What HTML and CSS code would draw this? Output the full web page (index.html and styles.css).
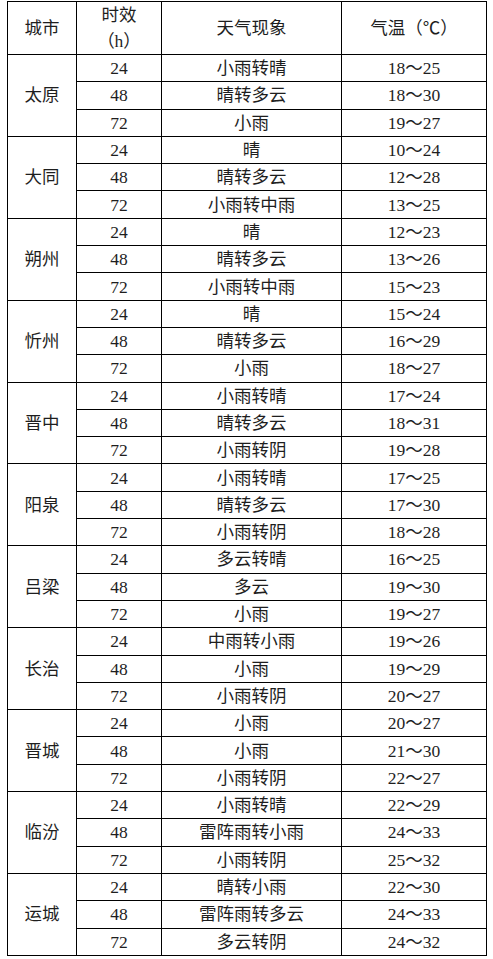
FILE: index.html
```html
<!DOCTYPE html>
<html lang="zh-CN">
<head>
<meta charset="utf-8">
<title>城市天气预报</title>
<link rel="stylesheet" href="styles.css">
</head>
<body>
<table class="forecast">
  <colgroup>
    <col class="c-city">
    <col class="c-hour">
    <col class="c-wx">
    <col class="c-temp">
  </colgroup>
  <thead>
    <tr class="head">
      <th>城市</th>
      <th>时效<br>（h）</th>
      <th>天气现象</th>
      <th>气温（℃）</th>
    </tr>
  </thead>
  <tbody>
    <tr><td class="city" rowspan="3">太原</td><td>24</td><td>小雨转晴</td><td>18～25</td></tr>
    <tr><td>48</td><td>晴转多云</td><td>18～30</td></tr>
    <tr><td>72</td><td>小雨</td><td>19～27</td></tr>

    <tr><td class="city" rowspan="3">大同</td><td>24</td><td>晴</td><td>10～24</td></tr>
    <tr><td>48</td><td>晴转多云</td><td>12～28</td></tr>
    <tr><td>72</td><td>小雨转中雨</td><td>13～25</td></tr>

    <tr><td class="city" rowspan="3">朔州</td><td>24</td><td>晴</td><td>12～23</td></tr>
    <tr><td>48</td><td>晴转多云</td><td>13～26</td></tr>
    <tr><td>72</td><td>小雨转中雨</td><td>15～23</td></tr>

    <tr><td class="city" rowspan="3">忻州</td><td>24</td><td>晴</td><td>15～24</td></tr>
    <tr><td>48</td><td>晴转多云</td><td>16～29</td></tr>
    <tr><td>72</td><td>小雨</td><td>18～27</td></tr>

    <tr><td class="city" rowspan="3">晋中</td><td>24</td><td>小雨转晴</td><td>17～24</td></tr>
    <tr><td>48</td><td>晴转多云</td><td>18～31</td></tr>
    <tr><td>72</td><td>小雨转阴</td><td>19～28</td></tr>

    <tr><td class="city" rowspan="3">阳泉</td><td>24</td><td>小雨转晴</td><td>17～25</td></tr>
    <tr><td>48</td><td>晴转多云</td><td>17～30</td></tr>
    <tr><td>72</td><td>小雨转阴</td><td>18～28</td></tr>

    <tr><td class="city" rowspan="3">吕梁</td><td>24</td><td>多云转晴</td><td>16～25</td></tr>
    <tr><td>48</td><td>多云</td><td>19～30</td></tr>
    <tr><td>72</td><td>小雨</td><td>19～27</td></tr>

    <tr><td class="city" rowspan="3">长治</td><td>24</td><td>中雨转小雨</td><td>19～26</td></tr>
    <tr><td>48</td><td>小雨</td><td>19～29</td></tr>
    <tr><td>72</td><td>小雨转阴</td><td>20～27</td></tr>

    <tr><td class="city" rowspan="3">晋城</td><td>24</td><td>小雨</td><td>20～27</td></tr>
    <tr><td>48</td><td>小雨</td><td>21～30</td></tr>
    <tr><td>72</td><td>小雨转阴</td><td>22～27</td></tr>

    <tr><td class="city" rowspan="3">临汾</td><td>24</td><td>小雨转晴</td><td>22～29</td></tr>
    <tr><td>48</td><td>雷阵雨转小雨</td><td>24～33</td></tr>
    <tr><td>72</td><td>小雨转阴</td><td>25～32</td></tr>

    <tr><td class="city" rowspan="3">运城</td><td>24</td><td>晴转小雨</td><td>22～30</td></tr>
    <tr><td>48</td><td>雷阵雨转多云</td><td>24～33</td></tr>
    <tr><td>72</td><td>多云转阴</td><td>24～32</td></tr>
  </tbody>
</table>
</body>
</html>
```

FILE: styles.css
```css
html, body {
  margin: 0;
  padding: 0;
  background: #ffffff;
}

body {
  padding: 1px 0 0 7px;
}

.forecast {
  border-collapse: collapse;
  table-layout: fixed;
  width: 479px;
  font-family: "Liberation Serif", "Noto Sans CJK SC", serif;
  font-size: 17.5px;
  color: #1e1e1e;
  text-spacing-trim: space-all;
}

.forecast .c-city { width: 69px; }
.forecast .c-hour { width: 85px; }
.forecast .c-wx { width: 180px; }
.forecast .c-temp { width: 145px; }

.forecast th,
.forecast td {
  border: 1px solid #000000;
  padding: 0;
  text-align: center;
  vertical-align: middle;
  font-weight: normal;
  white-space: nowrap;
}

.forecast .head th {
  height: 52px;
  line-height: 26px;
}

.forecast tbody td {
  height: 26.3px;
  line-height: 20px;
}
```
